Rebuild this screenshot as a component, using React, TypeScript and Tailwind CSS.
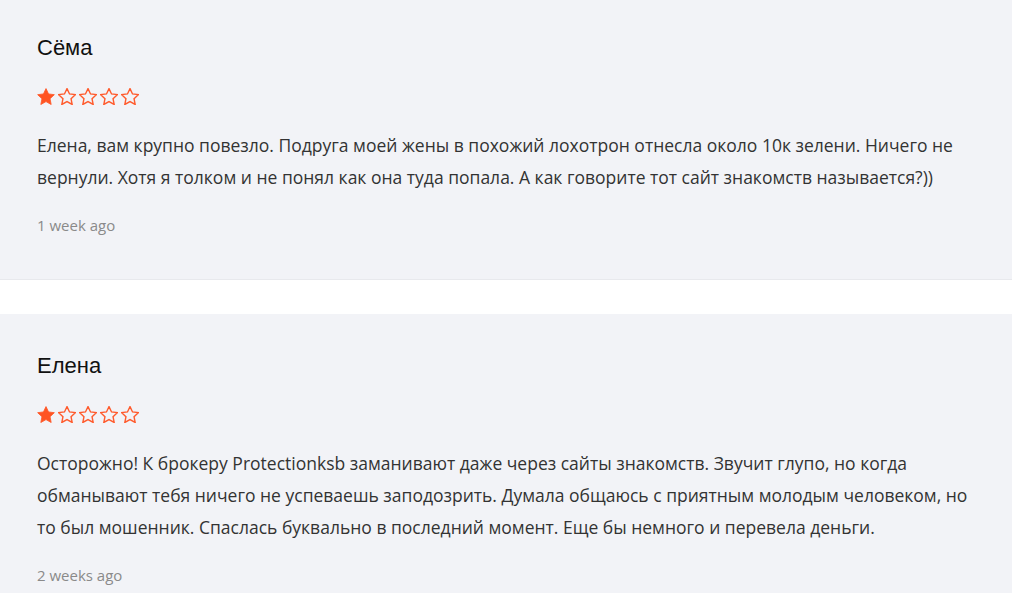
import React from "react";

type Review = {
  name: string;
  rating: number;
  text: string;
  date: string;
};

const reviews: Review[] = [
  {
    name: "Сёма",
    rating: 1,
    text: "Елена, вам крупно повезло. Подруга моей жены в похожий лохотрон отнесла около 10к зелени. Ничего не вернули. Хотя я толком и не понял как она туда попала. А как говорите тот сайт знакомств называется?))",
    date: "1 week ago",
  },
  {
    name: "Елена",
    rating: 1,
    text: "Осторожно! К брокеру Protectionksb заманивают даже через сайты знакомств. Звучит глупо, но когда обманывают тебя ничего не успеваешь заподозрить. Думала общаюсь с приятным молодым человеком, но то был мошенник. Спаслась буквально в последний момент. Еще бы немного и перевела деньги.",
    date: "2 weeks ago",
  },
];

const STAR =
  "M12 2.5l2.9 6.1 6.6.8-4.9 4.6 1.3 6.6L12 17.3l-5.9 3.3 1.3-6.6-4.9-4.6 6.6-.8L12 2.5z";

function Stars({ rating }: { rating: number }) {
  return (
    <div className="flex items-center gap-[3px] h-4">
      {[0, 1, 2, 3, 4].map((i) => (
        <svg key={i} width="18" height="17" viewBox="1.8 1.8 20.4 19.4" className="block shrink-0">
          <path
            d={STAR}
            fill={i < rating ? "#ff5423" : "none"}
            stroke="#ff5a2c"
            strokeWidth={i < rating ? 1 : 1.6}
            strokeLinejoin="miter"
          />
        </svg>
      ))}
    </div>
  );
}

function ReviewCard({ review }: { review: Review }) {
  return (
    <div className="bg-[#f2f3f7] pl-[37px] pr-[30px] pt-[36px] pb-[42px] shadow-[0_1px_0_#e8e9ed]">
      <div
        className="text-[22px] leading-8 text-[#111111]"
        style={{ fontFamily: '"Liberation Sans", Arial, sans-serif' }}
      >
        {review.name}
      </div>
      <div className="mt-[24px]">
        <Stars rating={review.rating} />
      </div>
      <p className="mt-[25px] text-[17.5px] leading-8 text-[#333333]">{review.text}</p>
      <div className="mt-[20px] text-[15px] leading-6 text-[#8a8a8a]">{review.date}</div>
    </div>
  );
}

export default function App() {
  return (
    <div
      className="w-[1012px] h-[593px] overflow-hidden bg-white"
      style={{ fontFamily: '"Open Sans", sans-serif' }}
    >
      <div className="-mt-1 flex flex-col gap-[35px]">
        {reviews.map((r) => (
          <ReviewCard key={r.name} review={r} />
        ))}
      </div>
    </div>
  );
}
